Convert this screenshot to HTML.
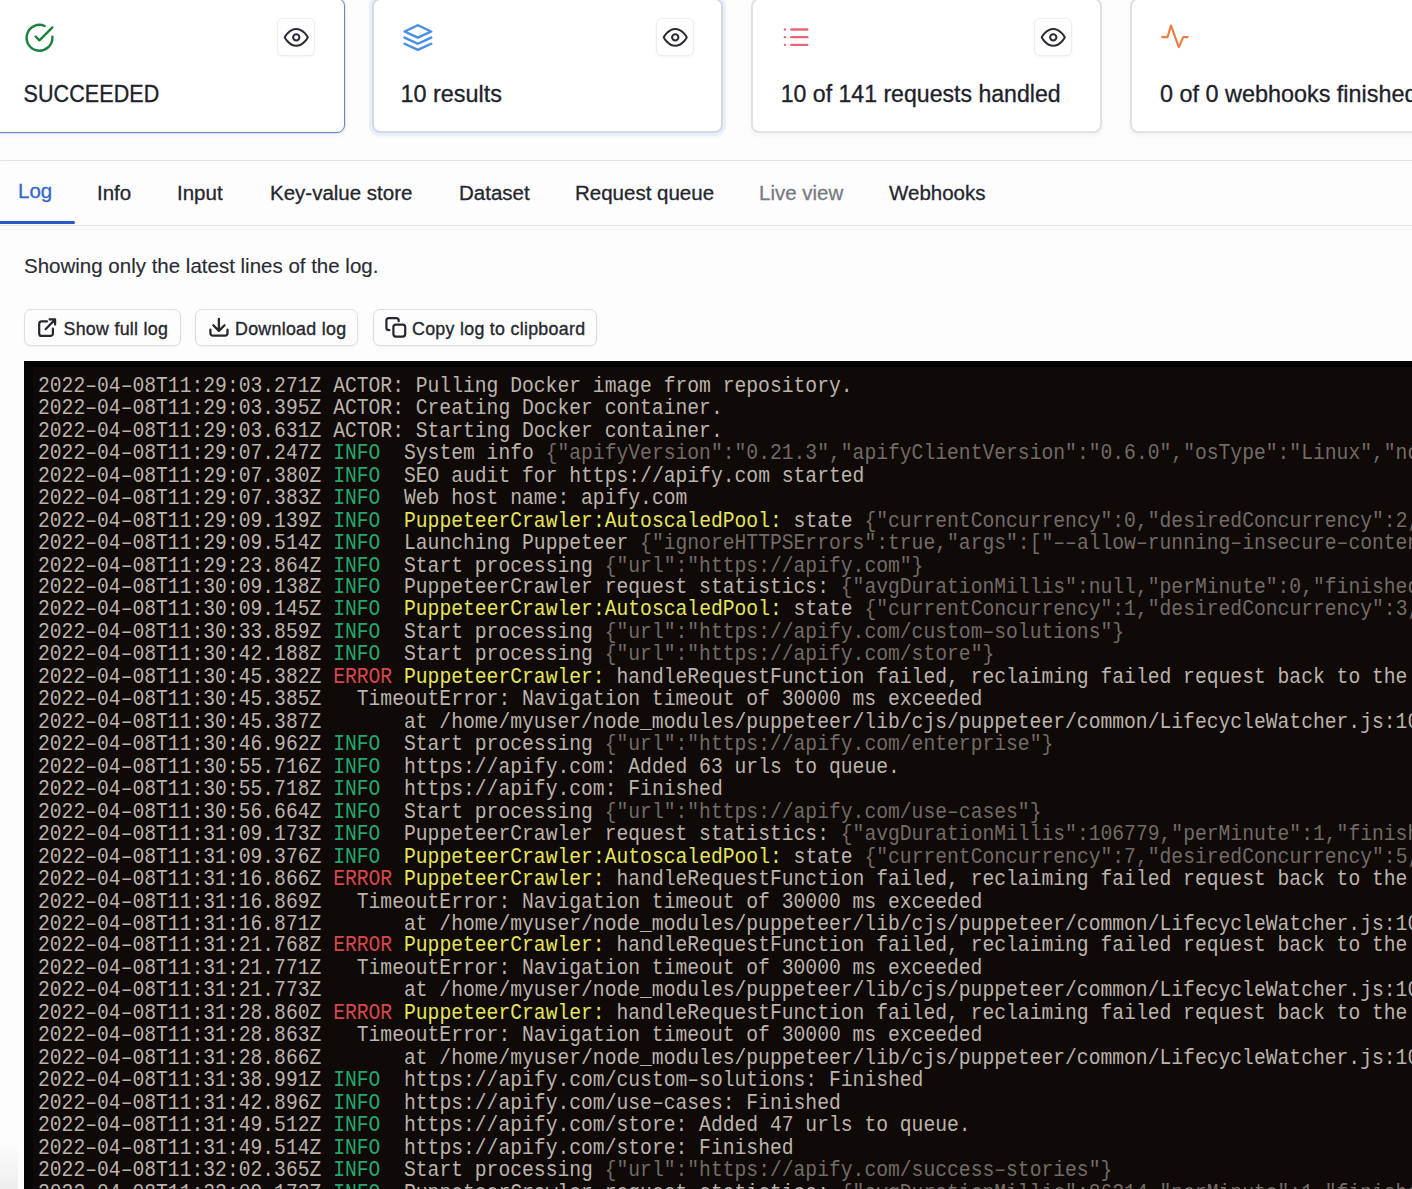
<!DOCTYPE html>
<html><head><meta charset="utf-8"><title>Run log</title>
<style>
html,body{margin:0;padding:0;}
body{width:1412px;height:1189px;overflow:hidden;position:relative;background:#fdfdfd;font-family:"Liberation Sans",sans-serif;color:#24252d;}
.card{position:absolute;top:-2px;width:351px;height:135px;box-sizing:border-box;background:#fff;border:2px solid #e2e2e4;border-radius:8px;box-shadow:0 3px 5px rgba(0,0,0,.04);}
.c1{left:-7px;width:352px;height:134.5px;border:1.5px solid #7188bd;box-shadow:0 0 0 1px rgba(160,195,240,.35),0 3px 5px rgba(0,0,0,.04);}
.c2{left:372px;border:2px solid #d3d9e7;box-shadow:0 0 0 3px #e9eff8,0 4px 5px rgba(0,0,0,.04);}
.c3{left:751px;}
.c4{left:1130px;width:360px;}
.ctext{position:absolute;top:79px;font-size:23.4px;line-height:30px;white-space:nowrap;color:#20212a;-webkit-text-stroke:0.3px #20212a;}
.pg{position:absolute;left:10px;top:10px;overflow:visible;}
.eye{position:absolute;top:17.5px;width:38px;height:38px;box-sizing:border-box;border:1px solid #eeeef0;border-radius:6px;background:#fff;box-shadow:0 1px 3px rgba(0,0,0,.05);}
.eye svg{position:absolute;left:-1px;top:-1px;overflow:visible;}
.ico{position:absolute;left:31px;top:22px;}
.tabs{position:absolute;left:-6px;top:160px;width:1500px;height:65.5px;box-sizing:border-box;border-top:1.5px solid #e2e2e4;border-bottom:1.5px solid #e6e6e8;border-radius:8px 0 0 0;background:#fdfdfd;}
.tab{position:absolute;top:17px;font-size:20.5px;line-height:30px;white-space:nowrap;color:#25262e;-webkit-text-stroke:0.3px currentColor;}
.tab.act{color:#3567cc;}
.tab.dis{color:#7a7a80;}
.uline{position:absolute;left:0;top:220.5px;width:75px;height:3.2px;background:#2859c4;border-radius:0 2px 2px 0;}
.info{position:absolute;left:24px;top:252px;font-size:20.5px;line-height:28px;white-space:nowrap;color:#2a2b33;-webkit-text-stroke:0.15px #2a2b33;}
.btn{position:absolute;top:309px;height:37px;box-sizing:border-box;border:1.5px solid #dedfe2;border-radius:7px;background:#fdfdfd;box-shadow:0 1px 2px rgba(0,0,0,.05);}
.btn span{position:absolute;top:7.5px;font-size:17.8px;letter-spacing:0.3px;line-height:22px;white-space:nowrap;color:#26272e;-webkit-text-stroke:0.35px #26272e;}
.btn svg{position:absolute;}
.log{position:absolute;left:24px;top:361px;width:1500px;height:900px;box-sizing:border-box;background:#0f0907;border-left:9px solid #050505;border-top:6px solid #000;}
.log pre{position:absolute;left:5px;top:9px;margin:0;font-family:"Liberation Mono",monospace;font-size:19.68px;line-height:19.93px;color:#bcb4ac;white-space:pre;transform-origin:0 0;transform:scaleY(1.124);}
.log i{font-style:normal;}
.log .g{color:#22a86e;}
.log .r{color:#d8474b;}
.log .y{color:#e6e65a;}
.log .j{color:#726b66;}
</style></head><body>

<div class="card c1"></div>
<div class="card c2"></div>
<div class="card c3"></div>
<div class="card c4"></div>
<div class="ctext" style="left:23.5px;top:80px;font-size:21.5px;letter-spacing:0.1px;transform:scaleY(1.1);transform-origin:0 22px">SUCCEEDED</div>
<div class="ctext" style="left:400.5px">10 results</div>
<div class="ctext" style="left:780.7px;font-size:23.1px">10 of 141 requests handled</div>
<div class="ctext" style="left:1160px">0 of 0 webhooks finished</div>
<div class="eye" style="left:276.5px"><svg width="38" height="38" viewBox="0 0 38 38"><g transform="translate(6.65 6.75) scale(1.05)"><path d="M1 12s4-8 11-8 11 8 11 8-4 8-11 8-11-8-11-8z" fill="none" stroke="#2a2b33" stroke-width="1.95" stroke-linejoin="round"/><circle cx="12" cy="12" r="3" fill="none" stroke="#2a2b33" stroke-width="1.95"/></g></svg></div>
<div class="eye" style="left:655.5px"><svg width="38" height="38" viewBox="0 0 38 38"><g transform="translate(6.65 6.75) scale(1.05)"><path d="M1 12s4-8 11-8 11 8 11 8-4 8-11 8-11-8-11-8z" fill="none" stroke="#2a2b33" stroke-width="1.95" stroke-linejoin="round"/><circle cx="12" cy="12" r="3" fill="none" stroke="#2a2b33" stroke-width="1.95"/></g></svg></div>
<div class="eye" style="left:1034px"><svg width="38" height="38" viewBox="0 0 38 38"><g transform="translate(6.65 6.75) scale(1.05)"><path d="M1 12s4-8 11-8 11 8 11 8-4 8-11 8-11-8-11-8z" fill="none" stroke="#2a2b33" stroke-width="1.95" stroke-linejoin="round"/><circle cx="12" cy="12" r="3" fill="none" stroke="#2a2b33" stroke-width="1.95"/></g></svg></div>
<svg class="pg" width="60" height="60" viewBox="10 10 60 60"><g transform="translate(24 22.3) scale(1.29)" fill="none" stroke="#1b8040" stroke-width="1.85" stroke-linecap="round" stroke-linejoin="round"><path d="M22 11.08V12a10 10 0 1 1-5.93-9.14"/><polyline points="22 4 12 14.01 9 11.01"/></g></svg>
<svg class="pg" width="60" height="60" viewBox="390 10 60 60" style="left:390px"><g transform="translate(401.9 22.84) scale(1.33 1.23)" fill="none" stroke="#4a90e0" stroke-width="1.95" stroke-linecap="round" stroke-linejoin="round"><polygon points="12 2 2 7 12 12 22 7 12 2"/><polyline points="2 17 12 22 22 17"/><polyline points="2 12 12 17 22 12"/></g></svg>
<svg class="pg" width="60" height="60" viewBox="770 10 60 60" style="left:770px"><g transform="translate(781.1 21.8) scale(1.28)" fill="none" stroke="#e96676" stroke-width="1.85" stroke-linecap="round" stroke-linejoin="round"><line x1="8" y1="6" x2="20.5" y2="6"/><line x1="8" y1="12" x2="20.5" y2="12"/><line x1="8" y1="18" x2="20.5" y2="18"/><line x1="3" y1="6" x2="3.01" y2="6"/><line x1="3" y1="12" x2="3.01" y2="12"/><line x1="3" y1="18" x2="3.01" y2="18"/></g></svg>
<svg class="pg" width="60" height="60" viewBox="1145 10 60 60" style="left:1145px"><polyline points="1162.1 37.1 1167.5 37.1 1171 25.6 1178.8 47.2 1183.2 37.1 1187.7 37.1" fill="none" stroke="#ee7b3f" stroke-width="2.1" stroke-linecap="round" stroke-linejoin="round"/></svg>

<div class="tabs">
  <div class="tab act" style="left:24px;top:15px">Log</div>
  <div class="tab" style="left:103px">Info</div>
  <div class="tab" style="left:183px">Input</div>
  <div class="tab" style="left:276px">Key-value store</div>
  <div class="tab" style="left:465px">Dataset</div>
  <div class="tab" style="left:581px">Request queue</div>
  <div class="tab dis" style="left:765px">Live view</div>
  <div class="tab" style="left:895px">Webhooks</div>
</div>
<div class="uline"></div>
<div style="position:absolute;left:0;top:228.5px;width:1412px;height:1px;background:#f2f2f3"></div>

<div class="info">Showing only the latest lines of the log.</div>

<div class="btn" style="left:24px;width:157px">
  <span style="left:38.5px">Show full log</span>
</div>
<div class="btn" style="left:195px;width:163px">
  <span style="left:39px">Download log</span>
</div>
<div class="btn" style="left:373px;width:224px">
  <span style="left:38px">Copy log to clipboard</span>
</div>

<svg class="pg" width="40" height="40" viewBox="28 308 40 40" style="left:28px;top:308px"><g fill="none" stroke="#26272e" stroke-width="2.2" stroke-linecap="round" stroke-linejoin="round"><path d="M47 321.4H41.7A2.5 2.5 0 0 0 39.2 323.9V333.4A2.5 2.5 0 0 0 41.7 335.9H50.4A2.5 2.5 0 0 0 52.9 333.4V328.5"/><path d="M45.6 329.2L55 319.6M49.6 319.4H55.1V324.6"/></g></svg>
<svg class="pg" width="40" height="40" viewBox="200 308 40 40" style="left:200px;top:308px"><g fill="none" stroke="#26272e" stroke-width="2.3" stroke-linecap="round" stroke-linejoin="round"><path d="M210.4 329.7V333.2A2.5 2.5 0 0 0 212.9 335.7H225A2.5 2.5 0 0 0 227.5 333.2V329.7"/><path d="M218.9 318.9V330.5M213.3 325.3L218.9 330.9L224.5 325.3"/></g></svg>
<svg class="pg" width="40" height="40" viewBox="376 308 40 40" style="left:376px;top:308px"><g fill="none" stroke="#26272e" stroke-width="2.2" stroke-linecap="round" stroke-linejoin="round"><path d="M389.4 330.2H388.9A2.5 2.5 0 0 1 386.4 327.7V320.6A2.5 2.5 0 0 1 388.9 318.1H396.2A2.5 2.5 0 0 1 398.7 320.6V321.2"/><rect x="393.4" y="324.6" width="11.8" height="12" rx="2.5"/></g></svg>
<div style="position:absolute;left:0;top:1145px;width:18px;height:44px;background:linear-gradient(#fcfcfc,#eeeeee)"></div>
<div class="log"><pre>2022–04–08T11:29:03.271Z ACTOR: Pulling Docker image from repository.
2022–04–08T11:29:03.395Z ACTOR: Creating Docker container.
2022–04–08T11:29:03.631Z ACTOR: Starting Docker container.
2022–04–08T11:29:07.247Z <i class="g">INFO</i>  System info <i class="j">{"apifyVersion":"0.21.3","apifyClientVersion":"0.6.0","osType":"Linux","nodeVersion":"v16.14.2"}</i>
2022–04–08T11:29:07.380Z <i class="g">INFO</i>  SEO audit for https://apify.com started
2022–04–08T11:29:07.383Z <i class="g">INFO</i>  Web host name: apify.com
2022–04–08T11:29:09.139Z <i class="g">INFO</i>  <i class="y">PuppeteerCrawler:AutoscaledPool:</i> state <i class="j">{"currentConcurrency":0,"desiredConcurrency":2,"systemStatus":{}}</i>
2022–04–08T11:29:09.514Z <i class="g">INFO</i>  Launching Puppeteer <i class="j">{"ignoreHTTPSErrors":true,"args":["––allow–running–insecure–content"]}</i>
2022–04–08T11:29:23.864Z <i class="g">INFO</i>  Start processing <i class="j">{"url":"https://apify.com"}</i>
2022–04–08T11:30:09.138Z <i class="g">INFO</i>  PuppeteerCrawler request statistics: <i class="j">{"avgDurationMillis":null,"perMinute":0,"finished":0}</i>
2022–04–08T11:30:09.145Z <i class="g">INFO</i>  <i class="y">PuppeteerCrawler:AutoscaledPool:</i> state <i class="j">{"currentConcurrency":1,"desiredConcurrency":3,"systemStatus":{}}</i>
2022–04–08T11:30:33.859Z <i class="g">INFO</i>  Start processing <i class="j">{"url":"https://apify.com/custom–solutions"}</i>
2022–04–08T11:30:42.188Z <i class="g">INFO</i>  Start processing <i class="j">{"url":"https://apify.com/store"}</i>
2022–04–08T11:30:45.382Z <i class="r">ERROR</i> <i class="y">PuppeteerCrawler:</i> handleRequestFunction failed, reclaiming failed request back to the queue
2022–04–08T11:30:45.385Z   TimeoutError: Navigation timeout of 30000 ms exceeded
2022–04–08T11:30:45.387Z       at /home/myuser/node_modules/puppeteer/lib/cjs/puppeteer/common/LifecycleWatcher.js:106:75
2022–04–08T11:30:46.962Z <i class="g">INFO</i>  Start processing <i class="j">{"url":"https://apify.com/enterprise"}</i>
2022–04–08T11:30:55.716Z <i class="g">INFO</i>  https://apify.com: Added 63 urls to queue.
2022–04–08T11:30:55.718Z <i class="g">INFO</i>  https://apify.com: Finished
2022–04–08T11:30:56.664Z <i class="g">INFO</i>  Start processing <i class="j">{"url":"https://apify.com/use–cases"}</i>
2022–04–08T11:31:09.173Z <i class="g">INFO</i>  PuppeteerCrawler request statistics: <i class="j">{"avgDurationMillis":106779,"perMinute":1,"finished":1}</i>
2022–04–08T11:31:09.376Z <i class="g">INFO</i>  <i class="y">PuppeteerCrawler:AutoscaledPool:</i> state <i class="j">{"currentConcurrency":7,"desiredConcurrency":5,"systemStatus":{}}</i>
2022–04–08T11:31:16.866Z <i class="r">ERROR</i> <i class="y">PuppeteerCrawler:</i> handleRequestFunction failed, reclaiming failed request back to the queue
2022–04–08T11:31:16.869Z   TimeoutError: Navigation timeout of 30000 ms exceeded
2022–04–08T11:31:16.871Z       at /home/myuser/node_modules/puppeteer/lib/cjs/puppeteer/common/LifecycleWatcher.js:106:75
2022–04–08T11:31:21.768Z <i class="r">ERROR</i> <i class="y">PuppeteerCrawler:</i> handleRequestFunction failed, reclaiming failed request back to the queue
2022–04–08T11:31:21.771Z   TimeoutError: Navigation timeout of 30000 ms exceeded
2022–04–08T11:31:21.773Z       at /home/myuser/node_modules/puppeteer/lib/cjs/puppeteer/common/LifecycleWatcher.js:106:75
2022–04–08T11:31:28.860Z <i class="r">ERROR</i> <i class="y">PuppeteerCrawler:</i> handleRequestFunction failed, reclaiming failed request back to the queue
2022–04–08T11:31:28.863Z   TimeoutError: Navigation timeout of 30000 ms exceeded
2022–04–08T11:31:28.866Z       at /home/myuser/node_modules/puppeteer/lib/cjs/puppeteer/common/LifecycleWatcher.js:106:75
2022–04–08T11:31:38.991Z <i class="g">INFO</i>  https://apify.com/custom–solutions: Finished
2022–04–08T11:31:42.896Z <i class="g">INFO</i>  https://apify.com/use–cases: Finished
2022–04–08T11:31:49.512Z <i class="g">INFO</i>  https://apify.com/store: Added 47 urls to queue.
2022–04–08T11:31:49.514Z <i class="g">INFO</i>  https://apify.com/store: Finished
2022–04–08T11:32:02.365Z <i class="g">INFO</i>  Start processing <i class="j">{"url":"https://apify.com/success–stories"}</i>
2022–04–08T11:32:09.173Z <i class="g">INFO</i>  PuppeteerCrawler request statistics: <i class="j">{"avgDurationMillis":86214,"perMinute":1,"finished":2}</i></pre></div>

</body></html>
